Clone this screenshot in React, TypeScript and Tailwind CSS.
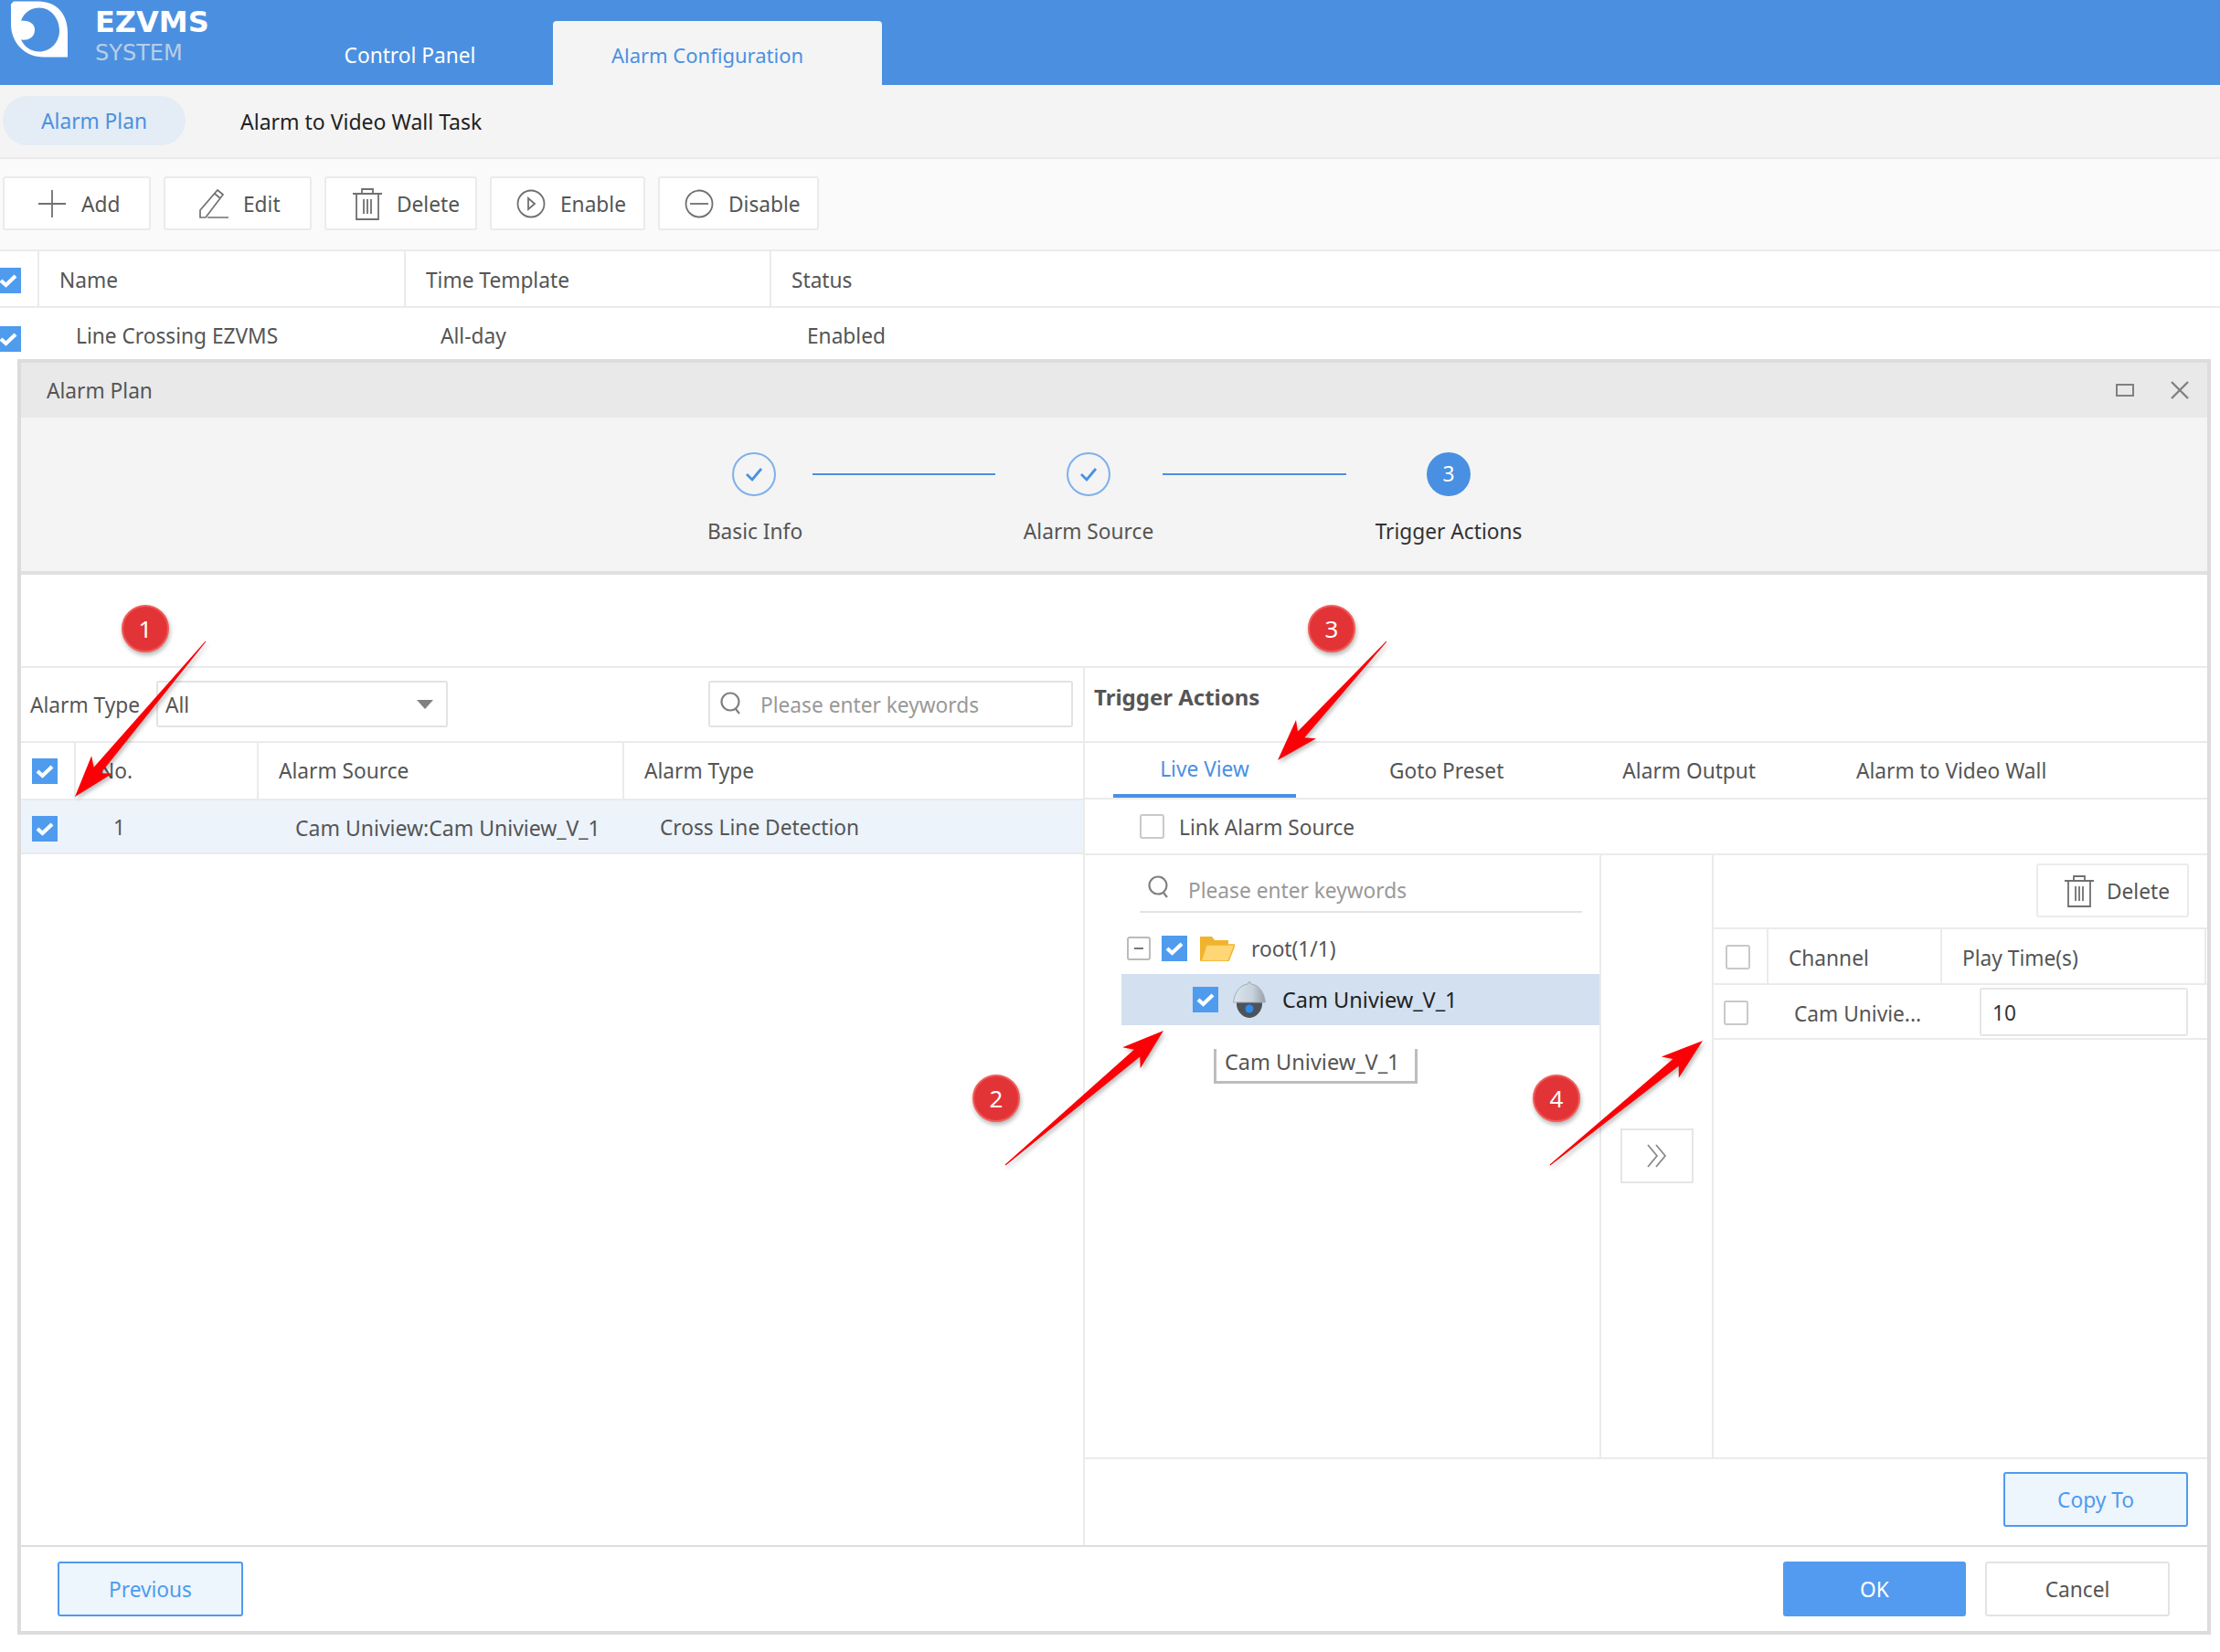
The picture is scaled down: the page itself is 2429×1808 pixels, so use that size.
import React from "react";

const Check = ({ className = "" }: { className?: string }) => (
  <span className={`flex h-[28px] w-[28px] shrink-0 items-center justify-center bg-[#4f9bee] ${className}`}>
    <svg width="20" height="16" viewBox="0 0 20 16" fill="none"><path d="M2 8l5.5 5L18 3" stroke="#fff" strokeWidth="4.2" /></svg>
  </span>
);
const Empty = ({ className = "" }: { className?: string }) => (
  <span className={`block h-[27px] w-[27px] shrink-0 rounded-[3px] border-2 border-[#c9c9c9] bg-white ${className}`} />
);
const Trash = () => (
  <svg width="34" height="36" viewBox="0 0 34 36" fill="none" stroke="#707070" strokeWidth="1.8">
    <path d="M1 7h32M11 7V2h12v5M5 7v28h24V7M13 13v16M17 13v16M21 13v16" />
  </svg>
);
const SearchIcon = () => (
  <svg width="26" height="28" viewBox="0 0 26 28" fill="none" stroke="#808080" strokeWidth="2.2">
    <circle cx="12" cy="11" r="9.5" /><path d="M18 19l4 5" />
  </svg>
);
const ToolBtn = ({ w, gap, pl, icon, label }: { w: string; gap: string; pl: string; icon: React.ReactNode; label: string }) => (
  <button className={`flex h-[59px] items-center rounded-[3px] border-2 border-[#ebebeb] bg-white ${w} ${gap} ${pl}`}>
    {icon}<span className="pt-[4px]">{label}</span>
  </button>
);
const StepDone = () => (
  <span className="flex h-[48px] w-[48px] shrink-0 items-center justify-center rounded-full border-2 border-[#7fb0ea]">
    <svg width="24" height="20" viewBox="0 0 24 20" fill="none"><path d="M4 10l6 6L20 4" stroke="#4a90e2" strokeWidth="2.8" /></svg>
  </span>
);
const Badge = ({ n, x, y }: { n: string; x: string; y: string }) => (
  <div className={`absolute flex h-[52px] w-[52px] items-center justify-center rounded-full border-2 border-[#f25b57] bg-[#e23437] text-[26px] text-white shadow-[1px_3px_5px_rgba(0,0,0,0.3)] ${x} ${y}`}>{n}</div>
);
function arrowPts(x1: number, y1: number, x2: number, y2: number) {
  const dx = x2 - x1, dy = y2 - y1, len = Math.hypot(dx, dy);
  const ux = dx / len, uy = dy / len, nx = -uy, ny = ux;
  const at = (d: number, o: number) => `${x1 + ux * d + nx * o},${y1 + uy * d + ny * o}`;
  return [at(0, 0.5), at(len - 38, 5), at(len - 46, 15), at(len, 0), at(len - 46, -15), at(len - 38, -5), at(0, -0.5)].join(" ");
}
const arrows = [
  [225, 702, 82, 872],
  [1100, 1275, 1273, 1128],
  [1517, 702, 1398, 832],
  [1696, 1275, 1863, 1139],
];

export default function App() {
  return (
    <div className="relative h-[1808px] w-[2429px] overflow-hidden bg-white font-['Noto_Sans',sans-serif] text-[22.7px] text-[#555]">
      {/* top bar */}
      <header className="flex h-[93px] items-end bg-[#4b90e0]">
        <div className="flex h-[93px] w-[270px] shrink-0 items-start">
          <svg className="ml-[12px] mt-[1px]" width="63" height="63" viewBox="0 0 63 62">
            <path fillRule="evenodd" fill="#fff" d="M3 0H30C50 0 62 14 62 34V61H36C15 61 0 45 0 25V3Z M11 21C15 11 23 7 31 7C44 7 53 19 53 32C53 45 43 55 31 55C22 55 15 50 11 42C20 43 26 39 26 31C26 24 20 21 11 21Z" />
          </svg>
          <div className="ml-[29px] mt-[4px] flex flex-col">
            <span className="font-['DejaVu_Sans',sans-serif] text-[32px] font-bold leading-[40px] text-white">EZVMS</span>
            <span className="pt-[1px] font-['DejaVu_Sans',sans-serif] text-[24px] leading-[26px] text-[#b9cde6]">SYSTEM</span>
          </div>
        </div>
        <div className="flex h-[70px] w-[335px] items-center justify-center pl-[22px] pt-[6px] text-white">Control Panel</div>
        <div className="flex h-[70px] w-[360px] items-center justify-center rounded-t-[4px] bg-[#f4f4f4] pr-[22px] pt-[5px] text-[22px] text-[#4a90e2]">Alarm Configuration</div>
      </header>

      {/* sub nav */}
      <nav className="flex h-[81px] items-center gap-[60px] border-b-2 border-[#ebebeb] bg-[#f4f4f4] pb-[2px] pl-[3px]">
        <span className="flex h-[54px] w-[200px] items-center justify-center rounded-[27px] bg-[#e4ecf5] pt-[3px] text-[#4a90e2]">Alarm Plan</span>
        <span className="pt-[3px] text-[23px] text-[#222]">Alarm to Video Wall Task</span>
      </nav>

      {/* tool bar */}
      <div className="flex h-[99px] items-start gap-[14px] bg-[#fafafa] pl-[3px] pt-[19px]">
        <ToolBtn w="w-[162px]" gap="gap-[16px]" pl="pl-[36px]" label="Add" icon={
          <svg width="32" height="32" viewBox="0 0 32 32" stroke="#707070" strokeWidth="1.8"><path d="M16 1v30M1 16h30" /></svg>} />
        <ToolBtn w="w-[162px]" gap="gap-[15px]" pl="pl-[36px]" label="Edit" icon={
          <svg width="34" height="34" viewBox="0 0 34 34" fill="none" stroke="#707070" strokeWidth="1.7"><path d="M2 32V24L21 2l6 5L8 32ZM10 32h23M18 6l6 5" /></svg>} />
        <ToolBtn w="w-[167px]" gap="gap-[15px]" pl="pl-[28px]" label="Delete" icon={<Trash />} />
        <ToolBtn w="w-[170px]" gap="gap-[16px]" pl="pl-[27px]" label="Enable" icon={
          <svg width="32" height="32" viewBox="0 0 32 32" fill="none" stroke="#707070" strokeWidth="1.8"><circle cx="16" cy="16" r="14.5" /><path d="M13 10l7 6-7 6Z" /></svg>} />
        <ToolBtn w="w-[176px]" gap="gap-[16px]" pl="pl-[27px]" label="Disable" icon={
          <svg width="32" height="32" viewBox="0 0 32 32" fill="none" stroke="#707070" strokeWidth="1.8"><circle cx="16" cy="16" r="14.5" /><path d="M6 16h20" /></svg>} />
      </div>

      {/* plan table */}
      <div className="flex h-[64px] items-stretch border-y-2 border-[#ebebeb]">
        <div className="flex w-[43px] items-center border-r-2 border-[#ebebeb] pt-[4px]"><Check className="-ml-[5px]" /></div>
        <div className="flex w-[401px] items-center border-r-2 border-[#ebebeb] pl-[22px] pt-[5px]">Name</div>
        <div className="flex w-[400px] items-center border-r-2 border-[#ebebeb] pl-[22px] pt-[5px]">Time Template</div>
        <div className="flex items-center pl-[22px] pt-[5px]">Status</div>
      </div>
      <div className="flex h-[56px] items-center">
        <Check className="-ml-[5px] mt-[12px]" />
        <span className="ml-[60px] w-[399px] pt-[6px]">Line Crossing EZVMS</span>
        <span className="w-[401px] pt-[6px]">All-day</span>
        <span className="pt-[6px]">Enabled</span>
      </div>

      {/* dialog */}
      <section className="ml-[19px] flex h-[1396px] w-[2400px] flex-col border-4 border-[#dcdcdc] bg-white">
        <div className="flex h-[60px] shrink-0 items-center justify-between bg-[#e9e9e9] pl-[28px] pr-[20px]">
          <span className="pt-[2px]">Alarm Plan</span>
          <div className="flex items-center gap-[40px]">
            <span className="block h-[14px] w-[20px] border-2 border-[#808080]" />
            <svg width="20" height="20" viewBox="0 0 20 20" stroke="#808080" strokeWidth="2.4"><path d="M1 1l18 18M19 1L1 19" /></svg>
          </div>
        </div>

        <div className="flex h-[172px] shrink-0 flex-col border-b-4 border-[#e0e0e0] bg-[#f4f4f4] pt-[38px]">
          <div className="flex items-center pl-[778px]">
            <StepDone />
            <span className="ml-[40px] h-[2px] w-[200px] bg-[#4a90e2]" />
            <span className="ml-[78px]"><StepDone /></span>
            <span className="ml-[57px] h-[2px] w-[201px] bg-[#4a90e2]" />
            <span className="ml-[88px] flex h-[48px] w-[48px] items-center justify-center rounded-full bg-[#4a90e2] text-white">3</span>
          </div>
          <div className="mt-[22px] flex pl-[703px]">
            <span className="w-[200px] text-center">Basic Info</span>
            <span className="ml-[165px] w-[200px] text-center">Alarm Source</span>
            <span className="ml-[194px] w-[200px] text-center text-[#333]">Trigger Actions</span>
          </div>
        </div>

        <div className="h-[102px] shrink-0 border-b-2 border-[#ebebeb]" />

        <div className="flex min-h-0 flex-1">
          {/* left */}
          <div className="w-[1162px] shrink-0">
            <div className="flex h-[82px] items-center border-b-2 border-[#ebebeb] pb-[1px]">
              <span className="ml-[10px] w-[138px] shrink-0 pt-[3px]">Alarm Type</span>
              <div className="flex h-[51px] w-[319px] items-center justify-between rounded-[3px] border-2 border-[#e3e3e3] pl-[8px] pr-[14px]">
                <span className="pt-[3px]">All</span>
                <span className="h-0 w-0 border-x-[9px] border-t-[10px] border-x-transparent border-t-[#808080]" />
              </div>
              <div className="ml-[285px] flex h-[51px] w-[399px] items-center gap-[19px] rounded-[3px] border-2 border-[#e3e3e3] pl-[10px] text-[#999]">
                <SearchIcon /><span className="pt-[3px]">Please enter keywords</span>
              </div>
            </div>
            <div className="flex h-[63px] items-stretch border-b-2 border-[#ebebeb]">
              <div className="flex w-[60px] items-center border-r-2 border-[#ebebeb] pl-[12px]"><Check /></div>
              <div className="flex w-[200px] items-center border-r-2 border-[#ebebeb] pl-[25px] pt-[2px]">No.</div>
              <div className="flex w-[400px] items-center border-r-2 border-[#ebebeb] pl-[22px] pt-[2px]">Alarm Source</div>
              <div className="flex items-center pl-[22px] pt-[2px]">Alarm Type</div>
            </div>
            <div className="flex h-[59px] items-center border-b-2 border-[#ebebeb] bg-[#ecf3fb]">
              <Check className="ml-[12px] mt-[5px]" />
              <span className="ml-[61px] w-[199px] pt-[3px]">1</span>
              <span className="w-[399px] pt-[3px] text-[23px]">Cam Uniview:Cam Uniview_V_1</span>
              <span className="pt-[3px]">Cross Line Detection</span>
            </div>
          </div>

          {/* right */}
          <div className="flex min-w-0 flex-1 flex-col border-l-2 border-[#ebebeb]">
            <div className="flex h-[82px] shrink-0 items-center border-b-2 border-[#ebebeb] pb-[17px] pl-[10px] text-[24px] font-bold text-[#555]">Trigger Actions</div>
            <div className="flex h-[62px] shrink-0 items-stretch border-b-2 border-[#ebebeb] pl-[31px] pt-[2px]">
              <span className="flex w-[200px] items-center justify-center border-b-[4px] border-[#4a90e2] text-[#4a90e2]">Live View</span>
              <span className="ml-[102px] flex items-center">Goto Preset</span>
              <span className="ml-[130px] flex items-center">Alarm Output</span>
              <span className="ml-[110px] flex items-center">Alarm to Video Wall</span>
            </div>
            <div className="flex h-[61px] shrink-0 items-center gap-[16px] border-b-2 border-[#ebebeb] pl-[60px]">
              <Empty /><span className="pt-[4px]">Link Alarm Source</span>
            </div>
            <div className="flex min-h-0 flex-1 border-b-2 border-[#ebebeb]">
              {/* tree */}
              <div className="relative w-[565px] shrink-0 border-r-2 border-[#ebebeb] pt-[10px]">
                <div className="ml-[60px] flex h-[53px] w-[484px] items-center gap-[19px] border-b-2 border-[#e3e3e3] pl-[8px] text-[#999]">
                  <SearchIcon /><span className="pt-[8px]">Please enter keywords</span>
                </div>
                <div className="mt-[24px] flex h-[30px] items-center pl-[46px]">
                  <span className="flex h-[26px] w-[26px] items-center justify-center rounded-[3px] border-2 border-[#bbb]"><span className="h-[2px] w-[10px] bg-[#777]" /></span>
                  <Check className="ml-[12px]" />
                  <svg className="ml-[14px]" width="38" height="28" viewBox="0 0 38 28">
                    <path d="M0 1h13l3 4h15v5H7L1 27H0Z" fill="#f2b32c" />
                    <path d="M7 10h31l-7 18H1Z" fill="#ffd675" stroke="#f2b32c" strokeWidth="1.5" />
                  </svg>
                  <span className="ml-[18px] pt-[2px]">root(1/1)</span>
                </div>
                <div className="ml-[40px] mt-[13px] flex h-[56px] items-center bg-[#d3e0f0] pl-[78px]">
                  <Check />
                  <svg className="ml-[16px]" width="36" height="40" viewBox="0 0 36 40">
                    <defs>
                      <linearGradient id="dome" x1="0" x2="1" y1="0" y2="0">
                        <stop offset="0" stopColor="#dbe5ee" /><stop offset="0.6" stopColor="#c6d1dc" /><stop offset="1" stopColor="#98a0a8" />
                      </linearGradient>
                    </defs>
                    <path d="M4 23h28c1 8-6 17-14 17S3 31 4 23Z" fill="#4c5359" />
                    <path d="M18 0l2 3c8 1 14 8 15.500 20H.5C2 11 8 4 16 3Z" fill="url(#dome)" stroke="#a4acb3" strokeWidth="1" />
                    <circle cx="18" cy="30" r="4.5" fill="#2e8bf0" />
                  </svg>
                  <span className="ml-[18px] pt-[1px] text-[23.5px] text-[#222]">Cam Uniview_V_1</span>
                </div>
                <div className="absolute left-[141px] top-[212px] flex h-[38px] w-[223px] items-center border-x-[3px] border-b-[3px] border-[#bdbdbd] pb-[6px] pl-[9px] text-[23.5px]">Cam Uniview_V_1</div>
              </div>
              {/* transfer */}
              <div className="w-[123px] shrink-0 border-r-2 border-[#ebebeb] pl-[21px] pt-[299px]">
                <span className="flex h-[60px] w-[80px] items-center justify-center border-2 border-[#e6e6e6]">
                  <svg width="24" height="26" viewBox="0 0 24 26" fill="none" stroke="#8a8a8a" strokeWidth="1.8"><path d="M2 1l10 12L2 25M11 1l10 12-10 12" /></svg>
                </span>
              </div>
              {/* selected */}
              <div className="min-w-0 flex-1">
                <div className="flex h-[81px] items-start justify-end border-b-2 border-[#ebebeb] pr-[20px] pt-[9px]">
                  <ToolBtn w="w-[167px]" gap="gap-[13px]" pl="pl-[28px]" label="Delete" icon={<Trash />} />
                </div>
                <div className="flex h-[61px] items-stretch border-b-2 border-[#ebebeb]">
                  <div className="flex w-[60px] items-center border-r-2 border-[#ebebeb] pl-[13px] pt-[2px]"><Empty /></div>
                  <div className="flex w-[190px] items-center border-r-2 border-[#ebebeb] pl-[22px] pt-[6px]">Channel</div>
                  <div className="flex w-[289px] items-center border-r-2 border-[#ebebeb] pl-[22px] pt-[6px]">Play Time(s)</div>
                </div>
                <div className="flex h-[60px] items-center border-b-2 border-[#ebebeb]">
                  <Empty className="ml-[11px] mt-[2px]" />
                  <span className="ml-[50px] w-[203px] pt-[6px]">Cam Univie...</span>
                  <div className="flex h-[53px] w-[228px] items-center rounded-[3px] border-2 border-[#e6e6e6] pl-[12px] pt-[5px] text-[#333]">10</div>
                </div>
              </div>
            </div>
            <div className="flex h-[94px] shrink-0 items-start justify-end pr-[21px] pt-[14px]">
              <button className="h-[60px] w-[202px] rounded-[3px] border-2 border-[#4f9bee] bg-[#edf5fd] pt-[2px] text-[#4f9bee]">Copy To</button>
            </div>
          </div>
        </div>

        {/* footer */}
        <div className="flex h-[94px] shrink-0 items-start border-t-[2px] border-[#dedede] pt-[16px]">
          <button className="ml-[40px] h-[60px] w-[203px] rounded-[3px] border-2 border-[#4f9bee] bg-[#edf5fd] pt-[3px] text-[#4f9bee]">Previous</button>
          <button className="ml-auto h-[60px] w-[200px] rounded-[3px] bg-[#529bf0] pt-[3px] text-white">OK</button>
          <button className="ml-[21px] mr-[41px] h-[60px] w-[202px] rounded-[3px] border-2 border-[#e3e3e3] bg-white pt-[3px]">Cancel</button>
        </div>
      </section>

      {/* annotations */}
      <svg className="pointer-events-none absolute left-0 top-0 drop-shadow-[2px_3px_2px_rgba(0,0,0,0.25)]" width="2429" height="1808">
        {arrows.map((a, i) => <polygon key={i} points={arrowPts(a[0], a[1], a[2], a[3])} fill="#fb0007" />)}
      </svg>
      <Badge n="1" x="left-[133px]" y="top-[662px]" />
      <Badge n="2" x="left-[1064px]" y="top-[1176px]" />
      <Badge n="3" x="left-[1431px]" y="top-[662px]" />
      <Badge n="4" x="left-[1677px]" y="top-[1176px]" />
    </div>
  );
}
